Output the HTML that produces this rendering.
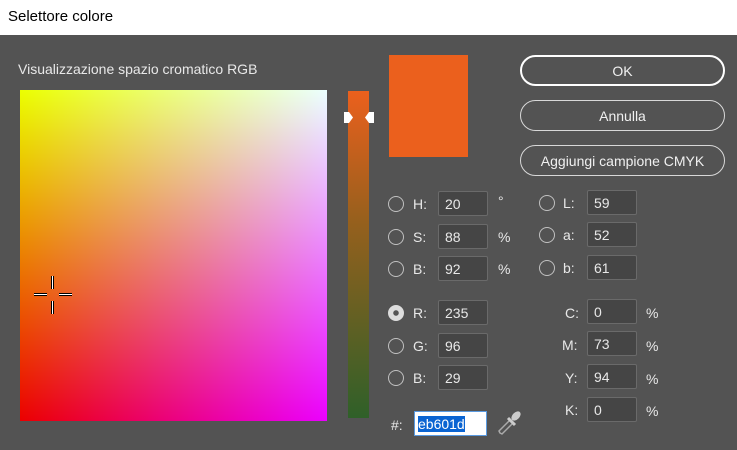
<!DOCTYPE html>
<html><head><meta charset="utf-8"><style>
*{margin:0;padding:0;box-sizing:border-box}
body{width:737px;height:450px;overflow:hidden;font-family:"Liberation Sans",sans-serif;background:#535353;position:relative;color:#e6e6e6}
.title{position:absolute;left:0;top:0;width:737px;height:35px;background:#fff;color:#000;font-size:15px;padding:8px 0 0 8px}
.a{position:absolute}
.lbl{font-size:14px;color:#e8e8e8}
.field{position:absolute;width:50px;height:25px;background:#454545;border:1px solid #6a6a6a;border-radius:2px;color:#e8e8e8;font-size:14px;padding:4px 0 0 6px}
.rad{position:absolute;width:16px;height:16px;border:1.5px solid #c0c0c0;border-radius:50%}
.btn{position:absolute;left:520px;width:205px;height:31px;border:1px solid #d8d8d8;border-radius:16px;text-align:center;font-size:14px;color:#f0f0f0;padding-top:7px}
</style></head><body>
<div class="title">Selettore colore</div>
<div class="a lbl" style="left:18px;top:61px">Visualizzazione spazio cromatico RGB</div>
<div class="a" style="left:20px;top:90px;width:307px;height:331px;background:linear-gradient(to right,rgb(235,0,0),rgb(235,0,255))">
 <div style="position:absolute;inset:0;background:linear-gradient(to bottom,rgb(0,255,0),rgb(0,0,0));mix-blend-mode:screen"></div>
</div>
<div class="a" style="left:51px;top:276px;width:3px;height:13px;background:#fff;border-left:1px solid #000;border-right:1px solid #000"></div>
<div class="a" style="left:51px;top:301px;width:3px;height:13px;background:#fff;border-left:1px solid #000;border-right:1px solid #000"></div>
<div class="a" style="left:34px;top:293px;width:13px;height:3px;background:#fff;border-top:1px solid #000;border-bottom:1px solid #000"></div>
<div class="a" style="left:59px;top:293px;width:13px;height:3px;background:#fff;border-top:1px solid #000;border-bottom:1px solid #000"></div>
<div class="a" style="left:348px;top:91px;width:21px;height:327px;background:linear-gradient(to bottom,rgb(235,96,29),rgb(150,96,29) 40%,rgb(47,96,41))"></div>
<svg class="a" style="left:343px;top:111px" width="32" height="13"><path d="M1 1h5l4 5.5-4 5.5H1z" fill="#fff"/><path d="M31 1h-5l-4 5.5 4 5.5h5z" fill="#fff"/></svg>
<div class="a" style="left:389px;top:55px;width:79px;height:102px;background:#eb601d"></div>
<div class="btn" style="top:55px;border:2px solid #fff;padding-top:6px">OK</div>
<div class="btn" style="top:100px">Annulla</div>
<div class="btn" style="top:145px">Aggiungi campione CMYK</div>
<div class="rad" style="left:388px;top:196px"></div><div class="a lbl" style="left:413px;top:196px">H:</div><div class="field" style="left:438px;top:191px">20</div><div class="a lbl" style="left:498px;top:193px">°</div>
<div class="rad" style="left:388px;top:229px"></div><div class="a lbl" style="left:413px;top:229px">S:</div><div class="field" style="left:438px;top:224px">88</div><div class="a lbl" style="left:498px;top:229px">%</div>
<div class="rad" style="left:388px;top:261px"></div><div class="a lbl" style="left:413px;top:261px">B:</div><div class="field" style="left:438px;top:256px">92</div><div class="a lbl" style="left:498px;top:261px">%</div>
<div class="rad" style="left:539px;top:195px"></div><div class="a lbl" style="left:563px;top:195px">L:</div><div class="field" style="left:587px;top:190px">59</div>
<div class="rad" style="left:539px;top:227px"></div><div class="a lbl" style="left:563px;top:227px">a:</div><div class="field" style="left:587px;top:222px">52</div>
<div class="rad" style="left:539px;top:260px"></div><div class="a lbl" style="left:563px;top:260px">b:</div><div class="field" style="left:587px;top:255px">61</div>
<div class="rad" style="left:388px;top:305px;border-color:#ddd;background:radial-gradient(circle,#555 0 2.5px,#ddd 3px)"></div><div class="a lbl" style="left:413px;top:305px">R:</div><div class="field" style="left:438px;top:300px">235</div>
<div class="rad" style="left:388px;top:338px"></div><div class="a lbl" style="left:413px;top:338px">G:</div><div class="field" style="left:438px;top:333px">96</div>
<div class="rad" style="left:388px;top:370px"></div><div class="a lbl" style="left:413px;top:370px">B:</div><div class="field" style="left:438px;top:365px">29</div>
<div class="a lbl" style="left:565px;top:305px">C:</div><div class="field" style="left:587px;top:299px">0</div><div class="a lbl" style="left:646px;top:305px">%</div>
<div class="a lbl" style="left:562px;top:337px">M:</div><div class="field" style="left:587px;top:331px">73</div><div class="a lbl" style="left:646px;top:338px">%</div>
<div class="a lbl" style="left:565px;top:370px">Y:</div><div class="field" style="left:587px;top:364px">94</div><div class="a lbl" style="left:646px;top:371px">%</div>
<div class="a lbl" style="left:565px;top:402px">K:</div><div class="field" style="left:587px;top:397px">0</div><div class="a lbl" style="left:646px;top:403px">%</div>
<div class="a lbl" style="left:391px;top:417px">#:</div>
<div class="a" style="left:414px;top:411px;width:73px;height:25px;background:#fff;border:1px solid #5a9ae0;padding:4px 0 0 3px;font-size:14px"><span style="background:#0a64d2;color:#fff">eb601d</span></div>
<svg class="a" style="left:496px;top:407px" width="26" height="30"><path d="M4 26 L3 24 L14 13 L17 16 L6 27z" fill="none" stroke="#aaa" stroke-width="1.5"/><path d="M12 11 L19 18" stroke="#ccc" stroke-width="3"/><ellipse cx="20" cy="9" rx="3.5" ry="5.5" transform="rotate(45 20 9)" fill="#ccc"/></svg>
</body></html>
